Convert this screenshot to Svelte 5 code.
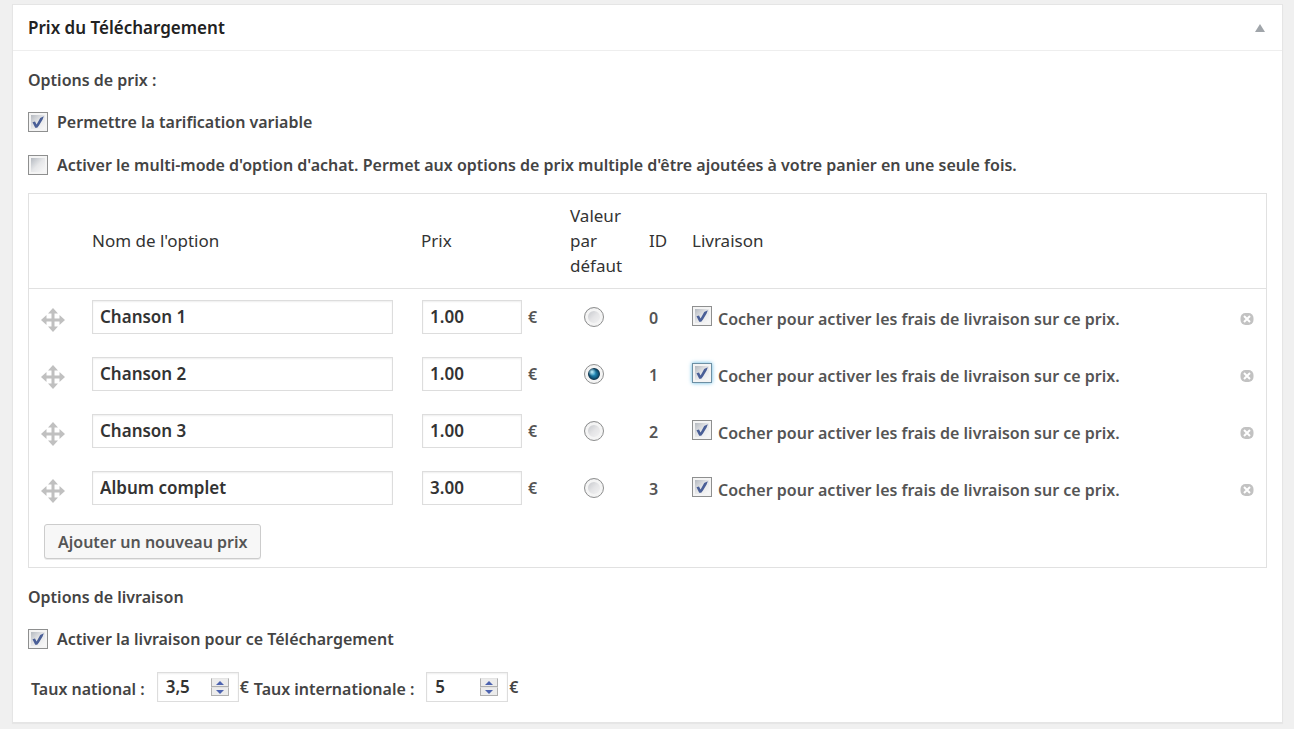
<script lang="ts">
  let options = $state([
    { id: 0, nom: 'Chanson 1', prix: '1.00', livraison: true },
    { id: 1, nom: 'Chanson 2', prix: '1.00', livraison: true },
    { id: 2, nom: 'Chanson 3', prix: '1.00', livraison: true },
    { id: 3, nom: 'Album complet', prix: '3.00', livraison: true }
  ])
  let parDefaut = $state(1)
  let actif = $state(1)
  let ouvert = $state(true)
  let variable = $state(true)
  let multi = $state(false)
  let livraison = $state(true)
  let taux = $state([
    { id: 'national', label: 'Taux national :', valeur: '3,5' },
    { id: 'international', label: 'Taux internationale :', valeur: '5' }
  ])

  function ajouter() {
    const id = Math.max(-1, ...options.map((o) => o.id)) + 1
    options.push({ id, nom: '', prix: '', livraison: false })
  }

  function retirer(id: number) {
    options = options.filter((o) => o.id !== id)
  }

  function pas(index: number, delta: number) {
    const n = Number(taux[index].valeur.replace(',', '.')) || 0
    taux[index].valeur = String(Math.max(0, n + delta)).replace('.', ',')
  }
</script>

{#snippet tick()}
  <svg class="tick" viewBox="0 0 20 20" aria-hidden="true">
    <path d="M4.5 10.2 7 9.5 8.6 12.4 12.2 6 15.8 4.2 14.6 7.5 11 13.5 9.2 15.8H7.2Z" />
  </svg>
{/snippet}

<section class="postbox" aria-labelledby="prix-title">
  <header>
    <h2 id="prix-title">Prix du Téléchargement</h2>
    <button
      type="button"
      class="toggle"
      aria-label="Ouvrir ou fermer"
      aria-expanded={ouvert}
      onclick={() => (ouvert = !ouvert)}
    >
      <svg viewBox="0 0 10 8" aria-hidden="true"><path d="M5 0 10 8H0Z" /></svg>
    </button>
  </header>

  {#if ouvert}
    <div class="inside">
      <p>Options de prix :</p>
      <label class="choice">
        <span class="check"><input type="checkbox" bind:checked={variable} />{@render tick()}</span>
        Permettre la tarification variable
      </label>
      <label class="choice">
        <span class="check"><input type="checkbox" bind:checked={multi} />{@render tick()}</span>
        Activer le multi-mode d'option d'achat. Permet aux options de prix multiple d'être ajoutées à votre panier en une seule fois.
      </label>

      <div class="prices">
        <table>
          <colgroup>
            <col class="col-handle" />
            <col class="col-name" />
            <col class="col-price" />
            <col class="col-default" />
            <col class="col-id" />
            <col />
            <col class="col-remove" />
          </colgroup>
          <thead>
            <tr>
              <th></th>
              <th scope="col">Nom de l'option</th>
              <th scope="col">Prix</th>
              <th scope="col" class="default-head">Valeur par défaut</th>
              <th scope="col">ID</th>
              <th scope="col">Livraison</th>
              <th></th>
            </tr>
          </thead>
          <tbody>
            {#each options as option (option.id)}
              <tr>
                <td class="handle">
                  <svg viewBox="0 0 24 24" aria-hidden="true">
                    <path
                      d="M12 0 17 5.5H13.5V10.5H18.5V7L24 12 18.5 17V13.5H13.5V18.5H17L12 24 7 18.5H10.5V13.5H5.5V17L0 12 5.5 7V10.5H10.5V5.5H7Z"
                    />
                  </svg>
                </td>
                <td class="field">
                  <input class="text name" type="text" aria-label="Nom de l'option" bind:value={option.nom} />
                </td>
                <td class="field">
                  <div class="amount">
                    <input class="text price" type="text" aria-label="Prix" bind:value={option.prix} />
                    <span>€</span>
                  </div>
                </td>
                <td class="field default">
                  <input
                    type="radio"
                    name="defaut"
                    aria-label="Valeur par défaut"
                    value={option.id}
                    bind:group={parDefaut}
                  />
                </td>
                <td>{option.id}</td>
                <td>
                  <label class="shipping">
                    <span class="check" class:active={actif === option.id}>
                      <input type="checkbox" bind:checked={option.livraison} onfocus={() => (actif = option.id)} />
                      {@render tick()}
                    </span>
                    <span class="caption">Cocher pour activer les frais de livraison sur ce prix.</span>
                  </label>
                </td>
                <td class="remove">
                  <button type="button" aria-label="Retirer" onclick={() => retirer(option.id)}>
                    <svg viewBox="0 0 14 14" aria-hidden="true">
                      <rect x="0.5" y="1" width="13" height="12" rx="5" />
                      <path d="M4 4 10 10M10 4 4 10" />
                    </svg>
                  </button>
                </td>
              </tr>
            {/each}
          </tbody>
        </table>
        <button type="button" class="add" onclick={ajouter}>Ajouter un nouveau prix</button>
      </div>

      <p>Options de livraison</p>
      <label class="choice">
        <span class="check"><input type="checkbox" bind:checked={livraison} />{@render tick()}</span>
        Activer la livraison pour ce Téléchargement
      </label>

      <div class="rates">
        {#each taux as t, i (t.id)}
          <label for={t.id}>{t.label}</label>
          <div class="number">
            <input id={t.id} type="text" inputmode="decimal" bind:value={t.valeur} />
            <span class="spin">
              <button type="button" aria-label="Augmenter" onclick={() => pas(i, 1)}>
                <svg viewBox="0 0 8 4" aria-hidden="true"><path d="M4 0 8 4H0Z" /></svg>
              </button>
              <button type="button" aria-label="Diminuer" onclick={() => pas(i, -1)}>
                <svg viewBox="0 0 8 4" aria-hidden="true"><path d="M0 0H8L4 4Z" /></svg>
              </button>
            </span>
          </div>
          <span class="unit">€</span>
        {/each}
      </div>
    </div>
  {/if}
</section>

<style>
  :global(body) {
    background: #f0f0f0;
    color: #444;
    font: 600 16px/24px "Noto Sans", "Open Sans", sans-serif;
  }

  input,
  button {
    box-sizing: border-box;
    margin: 0;
    font: inherit;
  }

  button {
    cursor: pointer;
  }

  svg {
    display: block;
  }

  .postbox {
    margin: 4px 11px 4px 12px;
    border: 1px solid #e5e5e5;
    background: white;
    box-shadow: 0 1px 1px rgba(0, 0, 0, 0.04);
  }

  header {
    display: flex;
    align-items: center;
    justify-content: space-between;
    padding: 10px 15px;
    border-bottom: 1px solid #eee;
  }

  h2 {
    margin: 0;
    color: #222;
    font-size: 17px;
    font-weight: 600;
    line-height: 25px;
  }

  .toggle {
    padding: 2px;
    border: 0;
    background: none;
  }

  .toggle svg {
    width: 10px;
    height: 8px;
    fill: #a0a5aa;
  }

  .inside {
    padding: 17px 15px 20px;
  }

  p {
    margin: 0 0 18px;
  }

  .choice {
    display: flex;
    align-items: center;
    gap: 9px;
    margin-bottom: 19px;
  }

  .check {
    display: grid;
    flex: none;
    width: 20px;
    height: 20px;
  }

  .check input,
  .tick {
    grid-area: 1 / 1;
    width: 20px;
    height: 20px;
  }

  .check input {
    appearance: none;
    border: 1px solid #8e8f8f;
    padding: 2px;
    background:
      linear-gradient(135deg, #b4b9c0, #e6e7e9 50%, #f8f8f8) content-box,
      #f4f4f4;
  }

  .check.active input {
    border-color: #6d8fa3;
    box-shadow: 0 0 4px #5bb5e0;
    outline: none;
  }

  .tick {
    visibility: hidden;
    fill: #4a5f97;
    pointer-events: none;
  }

  .check input:checked + .tick {
    visibility: visible;
  }

  .prices {
    margin: -3px 0 17px;
    border: 1px solid #e1e1e1;
  }

  table {
    width: 100%;
    border-spacing: 0;
    table-layout: fixed;
    color: #555;
  }

  .col-handle {
    width: 63px;
  }

  .col-name {
    width: 329px;
  }

  .col-price {
    width: 149px;
  }

  .col-default {
    width: 79px;
  }

  .col-id {
    width: 43px;
  }

  .col-remove {
    width: 26px;
  }

  th {
    padding: 9px 0 10px;
    border-bottom: 1px solid #e1e1e1;
    color: #333;
    font-size: 17px;
    font-weight: 400;
    line-height: 25px;
    text-align: left;
  }

  .default-head {
    padding-right: 20px;
  }

  tbody tr {
    height: 57px;
  }

  td {
    padding: 0;
  }

  .field {
    padding-bottom: 2px;
  }

  .handle {
    padding: 4px 0 0 12px;
  }

  .handle svg {
    width: 24px;
    height: 24px;
    fill: #c0c0c0;
  }

  .text {
    display: block;
    height: 34px;
    border: 1px solid #ddd;
    padding: 0 7px;
    background: white;
    box-shadow: inset 0 1px 2px rgba(0, 0, 0, 0.07);
    color: #333;
    font-size: 17px;
  }

  .name {
    width: 301px;
  }

  .price {
    width: 100px;
  }

  .amount {
    display: flex;
    align-items: center;
    gap: 6px;
    padding-left: 1px;
  }

  .default {
    padding-left: 14px;
  }

  .default input {
    display: block;
    appearance: none;
    width: 20px;
    height: 20px;
    border: 1px solid #8e8f8f;
    border-radius: 50%;
    background: linear-gradient(135deg, #b9bcc1, #e4e4e6 50%, #f8f8f8);
    box-shadow: inset 0 0 0 3px #f4f4f4;
  }

  .default input:checked {
    background:
      radial-gradient(circle at 7px 7px, #c8f4ff 0, rgba(57, 176, 220, 0) 4px),
      radial-gradient(circle at 9px 9px, #2a9fce 0, #115a80 4px, #0b2c42 6px, #f4f4f4 7px);
  }

  .shipping {
    display: flex;
    align-items: center;
    gap: 6px;
  }

  .shipping .check {
    margin-bottom: 4px;
  }

  .caption {
    padding-top: 2px;
  }

  .remove button {
    display: block;
    border: 0;
    padding: 2px 0 0;
    background: none;
  }

  .remove svg {
    width: 14px;
    height: 14px;
    fill: #c2c2c2;
    stroke: white;
    stroke-width: 2;
  }

  .remove rect {
    stroke: none;
  }

  .add {
    display: block;
    height: 35px;
    margin: 7px 15px 8px;
    border: 1px solid #ccc;
    border-radius: 3px;
    padding: 0 13px;
    background: #f7f7f7;
    box-shadow: 0 1px 0 rgba(0, 0, 0, 0.08);
    color: #555;
  }

  .rates {
    display: flex;
    align-items: center;
    padding: 2px 0 0 3px;
  }

  .rates label {
    padding: 4px 12px 0 0;
  }

  .number {
    display: flex;
    align-items: center;
    box-sizing: border-box;
    width: 82px;
    height: 30px;
    border: 1px solid #ddd;
    padding: 0 9px 0 8px;
    box-shadow: inset 0 1px 2px rgba(0, 0, 0, 0.07);
  }

  .number input {
    flex: 1;
    min-width: 0;
    border: 0;
    padding: 0;
    background: none;
    color: #333;
    font-size: 17px;
    outline: none;
  }

  .spin {
    display: grid;
    width: 18px;
  }

  .spin button {
    display: grid;
    place-items: center;
    height: 9px;
    border: 1px solid #b0b0b0;
    border-top-color: #e4e4e4;
    padding: 0;
    background: #ececec;
  }

  .spin svg {
    width: 8px;
    height: 4px;
    fill: #4c63b0;
  }

  .unit {
    padding: 0 5px 0 1px;
  }
</style>
